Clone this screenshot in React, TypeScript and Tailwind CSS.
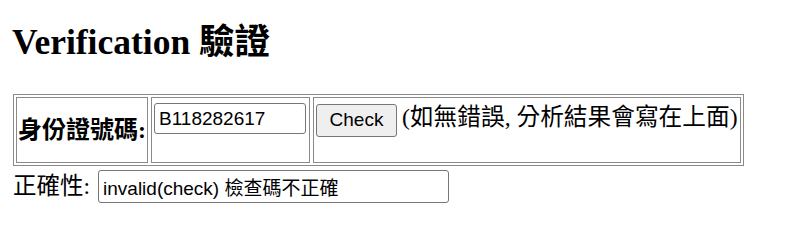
import React from 'react';

const serif = "font-['Liberation_Serif','Noto_Sans_CJK_TC',serif]";
const sans = "font-['Liberation_Sans','Noto_Sans_CJK_TC',sans-serif]";

export default function App() {
  return (
    <div className={`${serif} bg-white text-black w-[810px] h-[244px] pl-[12px] pt-[23px]`}>
      {/* Heading */}
      <h2 className="text-[35.5px] leading-[39px] font-bold">Verification 驗證</h2>

      {/* Input table */}
      <div className="mt-[32px] ml-[1px] flex w-[731px] gap-[3px] p-[2px] border border-[#8a8a8a]">
        <div className="w-[132px] h-[66px] border border-[#8a8a8a] flex items-center justify-center">
          <span className="text-[24px] font-bold">身份證號碼:</span>
        </div>
        <div className="w-[159px] h-[66px] border border-[#8a8a8a] pl-[2px] pt-[5px]">
          <input
            readOnly
            value="B118282617"
            className={`${sans} w-[152px] h-[31px] px-[4px] text-[19px] text-black border border-[#767676] rounded-[3px] bg-white outline-none`}
          />
        </div>
        <div className="flex-1 h-[66px] border border-[#8a8a8a] pl-[2px] pt-[6px] flex items-start">
          <button className={`${sans} w-[81px] h-[33px] text-[19px] bg-[#efefef] border border-[#767676] rounded-[3px]`}>
            Check
          </button>
          <span className="ml-[5px] text-[23.7px] leading-[28px] -mt-[1px]">(如無錯誤, 分析結果會寫在上面)</span>
        </div>
      </div>

      {/* Result row */}
      <div className="flex items-center mt-[3px] ml-[1px]">
        <span className="text-[23.5px]">正確性:</span>
        <input
          readOnly
          value="invalid(check) 檢查碼不正確"
          className={`${sans} ml-[8px] w-[351px] h-[33px] px-[4px] text-[19px] text-black border border-[#767676] rounded-[3px] bg-white outline-none`}
        />
      </div>
    </div>
  );
}
